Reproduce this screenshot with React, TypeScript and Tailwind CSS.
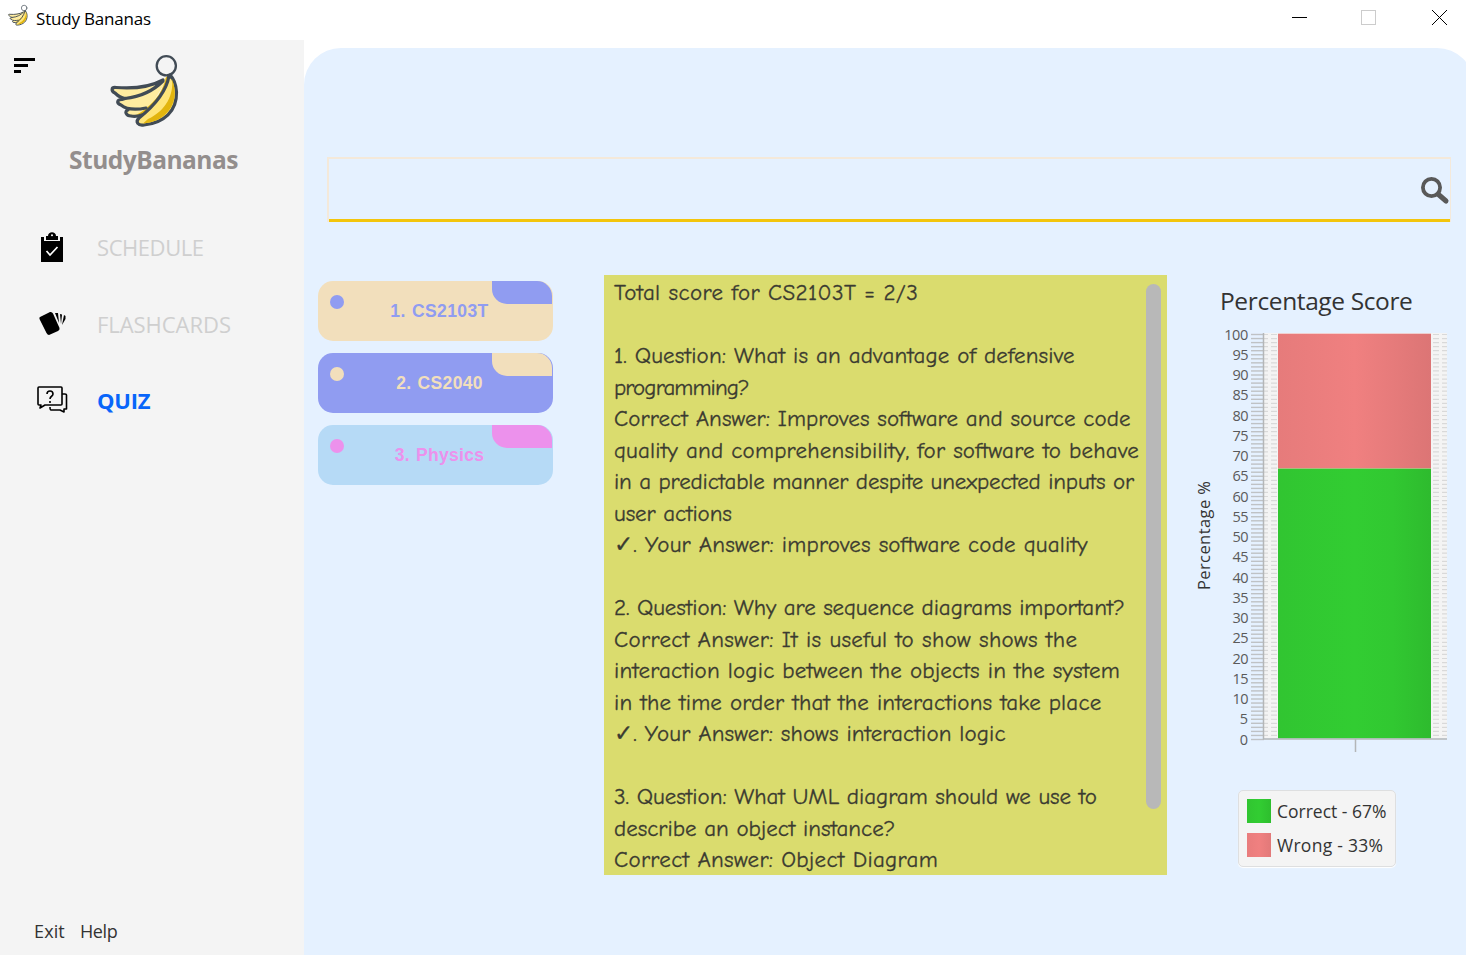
import React, { useLayoutEffect, useRef, useState } from "react";

// Text whose tracking is adjusted so that it spans the given width.
function Fit({ w, children, className = "" }: { w: number; children: string; className?: string }) {
  const ref = useRef<HTMLSpanElement>(null);
  const [spacing, setSpacing] = useState(0);
  useLayoutEffect(() => {
    if (ref.current) setSpacing((w - ref.current.offsetWidth) / children.length);
  }, [w, children]);
  return (
    <span ref={ref} className={"inline-block whitespace-pre " + className} style={{ letterSpacing: spacing }}>
      {children}
    </span>
  );
}

function Bananas({ className }: { className: string }) {
  return (
    <svg viewBox="0 0 90 90" className={className} fill="none" stroke="#414b55" strokeWidth="3.2" strokeLinejoin="round" strokeLinecap="round">
      <path stroke="none" fill="#ffeca0" d="M63 34C50 41 34 43.500 16 42C11 41.500 11 46 15 48C18 51 21 53 25 53L22 54C17 54 16 58 21 60L28 65C24 66 26 71 31 71C35 72 41 71 46 69L69 31Z" />
      <path stroke="none" fill="#e2b50e" d="M66 32C64 44 55 57 45 64C42 67 39 68 36 70C48 71 62 55 69 31Z" />
      <path d="M63 35C50 42 34 44 16 42.500C11 42 11 46 15 48C18 51 21 53 25 53.500C43 51.500 54 45 63 36" />
      <path d="M25 53.500L22 54.500C17 54.500 16 58 21 60C27 65 36 65 46 63" />
      <path d="M28 65C24 66 26 71 31 71C35 72 39 71 42 70" />
      <path fill="#ffe67a" d="M69 31C66 48 54 61 39 73C35 77 38 81 44 80C64 78 77 66 76.500 47C76 40 74 34 70 30Z" />
      <path stroke="none" fill="#e2b50e" d="M72 34C74 49 66 66 48 74L43 78.400C62 77.500 75 64 74.800 47C74.500 41 73 37 72 34Z" />
      <circle cx="66.300" cy="20.800" r="9.600" strokeWidth="2.300" />
      <path strokeWidth="3.500" d="M69 31L71 32" />
    </svg>
  );
}

const ui = "font-['Open_Sans','Noto_Sans',sans-serif]";

function TitleBar() {
  return (
    <header className="flex h-10 shrink-0 items-start justify-between bg-white">
      <div className="flex items-start pl-[5px]">
        <Bananas className="mt-0.5 h-[26px] w-[26px]" />
        <Fit w={114.5} className="ml-[5px] mt-[5px] text-[17px] leading-[27px] text-black">Study Bananas</Fit>
      </div>
      <svg className="h-9 w-[186px]" viewBox="0 0 186 36" fill="none" shapeRendering="crispEdges">
        <path d="M12 17.500H27" stroke="#000" />
        <rect x="81.500" y="10.500" width="14" height="14" stroke="#ccc" />
        <path d="M152 10L167 25M167 10L152 25" stroke="#000" shapeRendering="auto" />
      </svg>
    </header>
  );
}

function Sidebar() {
  return (
    <aside className="flex w-[304px] shrink-0 flex-col bg-[#f4f4f4]">
      <div className="flex h-[100px] items-start">
        <svg className="ml-3.5 mt-[18px] h-4 w-[22px]" viewBox="0 0 22 16" shapeRendering="crispEdges">
          <path d="M0 0H21V3H0ZM0 6H14V9H0ZM0 12H7V15H0Z" />
        </svg>
        <Bananas className="ml-16 mt-[5px] h-[90px] w-[90px]" />
      </div>
      <Fit w={169} className="ml-[69px] self-start text-[24.500px] leading-10 font-bold text-[#938e8d]">StudyBananas</Fit>
      <nav className="mt-[30px] flex flex-col">
        <div className="flex h-[76px] items-center pl-9">
          <svg className="mb-1 h-8 w-8" viewBox="0 0 32 32">
            <path d="M5 7H8V11H24V7H27V32H5ZM10 6H12C12 1 20 1 20 6H22V10H10Z" />
            <circle cx="16" cy="5.200" r="1" fill="#fff" />
            <path d="M10.500 21L14 25L21.500 17" fill="none" stroke="#fff" strokeWidth="1.700" />
          </svg>
          <Fit w={106.5} className="mb-0.5 ml-[29px] text-[22px] text-[#cfcfcf]">SCHEDULE</Fit>
        </div>
        <div className="flex h-[78px] items-center pl-9">
          <svg className="mb-0.5 h-8 w-8" viewBox="0 0 32 32">
            <path d="M4 9L14 4Q16 3.500 17 5.500L23.500 20Q24 22 22 23L13 27Q11.500 27 10.500 25L3.500 11Q3 9.500 4 9ZM19 5H22L23 15ZM24 6L26 6.500L25 16ZM28 7L29.500 8V11L26 17Z" />
          </svg>
          <Fit w={133.5} className="mb-0.5 ml-[29px] text-[22px] text-[#cfcfcf]">FLASHCARDS</Fit>
        </div>
        <div className="flex h-[74px] items-center pl-9">
          <svg className="mb-0.5 h-8 w-8" viewBox="0 0 32 32" fill="none" stroke="#000" strokeWidth="1.600" strokeLinejoin="round">
            <path d="M3 3H25Q26 3 26 4V20Q26 21 25 21H9L4 24L5 21H3Q2 21 2 20V4Q2 3 3 3ZM26 10H29Q30.500 10 30.500 11V25H28V28L24 26H15Q14 26 14 23" />
            <path d="M11 10C11 6 17 6 17 10C17 12.500 14 12 14 15M14 17V19" />
          </svg>
          <Fit w={53} className="mb-0.5 ml-[29px] text-[22px] font-bold text-[#0865fa]">QUIZ</Fit>
        </div>
      </nav>
      <div className="mt-auto flex h-12 items-center pl-[34px] text-[18px] text-[#333]">
        <Fit w={30.5}>Exit</Fit>
        <Fit w={37.5} className="ml-[15px]">Help</Fit>
      </div>
    </aside>
  );
}

type Quiz = { name: string; w: number; card: string; dot: string; text: string };
const quizzes: Quiz[] = [
  { name: "1. CS2103T", w: 98, card: "bg-[#f2dfbc]", dot: "bg-[#909cf1]", text: "text-[#909cf1]" },
  { name: "2. CS2040", w: 87, card: "bg-[#909cf1]", dot: "bg-[#f2dfbc]", text: "text-[#f2dfbc]" },
  { name: "3. Physics", w: 90, card: "bg-[#b6daf6]", dot: "bg-[#ec91ec]", text: "text-[#ec91ec]" },
];

function QuizCard({ q }: { q: Quiz }) {
  return (
    <div className={"flex h-[60px] items-start rounded-[15px] " + q.card}>
      <div className={"ml-3 mt-3.5 h-3.5 w-3.5 rounded-full " + q.dot} />
      <div className={"ml-[18px] mt-[18px] w-[155px] text-center font-['Liberation_Sans',sans-serif] text-[17.500px] leading-6 font-bold [word-spacing:1px] " + q.text}>
        <Fit w={q.w}>{q.name}</Fit>
      </div>
      <div className={"-ml-[25px] h-[23px] w-[60px] rounded-tr-[15px] rounded-bl-[15px] " + q.dot} />
    </div>
  );
}

const lines: [string, number][] = [
  ["Total score for CS2103T = 2/3", 304],
  ["", 0],
  ["1. Question: What is an advantage of defensive", 461],
  ["programming?", 135],
  ["Correct Answer: Improves software and source code", 517],
  ["quality and comprehensibility, for software to behave", 525],
  ["in a predictable manner despite unexpected inputs or", 520],
  ["user actions", 118],
  ["✓. Your Answer: improves software code quality", 474],
  ["", 0],
  ["2. Question: Why are sequence diagrams important?", 511],
  ["Correct Answer: It is useful to show shows the", 463],
  ["interaction logic between the objects in the system", 506],
  ["in the time order that the interactions take place", 487],
  ["✓. Your Answer: shows interaction logic", 392],
  ["", 0],
  ["3. Question: What UML diagram should we use to", 483],
  ["describe an object instance?", 281],
  ["Correct Answer: Object Diagram", 324],
];

function Results() {
  return (
    <section className="ml-[51px] flex h-[600px] w-[563px] shrink-0 overflow-hidden bg-[#dadc6e] pl-[10px] pt-0.5">
      <div className="w-[532px] font-['Comic_Sans_MS','Comic_Neue',Lato,sans-serif] text-[23px] text-[#3b3b31] [-webkit-text-stroke:0.3px_#3b3b31]">
        {lines.map(([t, w], i) => (
          <div key={i} className="h-[31.5px] leading-[31.5px]">{t && <Fit w={w}>{t}</Fit>}</div>
        ))}
      </div>
      <div className="mt-[7px] h-[525px] w-[15px] rounded-full bg-[#b8b8b8]" />
    </section>
  );
}

function Chart() {
  const ticks = Array.from({ length: 101 }, (_, i) => i);
  const labels = Array.from({ length: 21 }, (_, i) => 100 - i * 5);
  return (
    <section className="ml-[27px] w-[256px] shrink-0 pt-2.5">
      <div className="h-8 pl-[26px] leading-8">
        <Fit w={192} className="text-[24.500px] text-[#333]">Percentage Score</Fit>
      </div>
      <div className="flex pt-[7px]">
        <div className="flex h-[422px] w-[21px] items-center justify-center">
          <div className="-rotate-90 whitespace-nowrap text-[16.500px] text-[#333]"><Fit w={109}>Percentage %</Fit></div>
        </div>
        <div className="ml-[3px] h-[426px] w-[30px] pt-[0.5px] text-right text-[14.500px] text-[#5a5a5a]">
          {labels.map((n) => (
            <div key={n} className="h-[20.25px] leading-[20.25px]"><Fit w={String(n).length * 8}>{String(n)}</Fit></div>
          ))}
        </div>
        <svg className="mt-[9px] h-[422px] w-[200px]" viewBox="0 0 200 422">
          <defs>
            <linearGradient id="red"><stop stopColor="#e67b7b" /><stop offset=".5" stopColor="#f08080" /><stop offset=".75" stopColor="#e67b7b" /><stop offset="1" stopColor="#dc7575" /></linearGradient>
            <linearGradient id="green"><stop stopColor="#31c531" /><stop offset=".5" stopColor="#32cd32" /><stop offset=".75" stopColor="#31c831" /><stop offset="1" stopColor="#2ebb2e" /></linearGradient>
          </defs>
          <rect x="16" width="183" height="405" fill="#f4f4f4" />
          {ticks.map((i) => (
            <g key={i}>
              <path d={`M3 ${1.5 + i * 4.05}H16`} stroke="#bfc2c5" strokeWidth="1.400" />
              {i < 100 && <path d={`M16 ${1.5 + i * 4.05}H20M23 ${1.5 + i * 4.05}H29M185 ${1.5 + i * 4.05}H191M194 ${1.5 + i * 4.05}H199`} stroke="#d9d9d9" strokeWidth="1.200" />}
            </g>
          ))}
          <rect x="30" y=".7" width="153" height="135" fill="url(#red)" />
          <rect x="30" y="135.500" width="153" height="270" fill="url(#green)" />
          <path d="M30 135.500H183" stroke="#a8bd7c" />
          <path d="M15.500 0V406H199M107.500 406V419" fill="none" stroke="#b4b6b8" strokeWidth="1.500" />
        </svg>
      </div>
      <div className="ml-11 mt-[35px] flex h-[77px] w-[158px] flex-col gap-2.5 rounded-[5px] border border-[#dedfe0] bg-[#f4f4f4] pl-2 pt-2 text-[17.500px] leading-6 text-[#333] shadow-[0_1px_1px_#fff]">
        <div className="flex h-6 gap-1.5"><div className="h-6 w-6 bg-linear-to-r from-[#31c531] via-[#32cd32] to-[#2ebe2e]" /><Fit w={110}>Correct - 67%</Fit></div>
        <div className="flex h-6 gap-1.5"><div className="h-6 w-6 bg-linear-to-r from-[#e97c7c] via-[#f08080] to-[#e27979]" /><Fit w={106}>Wrong - 33%</Fit></div>
      </div>
    </section>
  );
}

export default function App() {
  return (
    <div className={"flex h-[955px] w-[1466px] flex-col overflow-hidden bg-white " + ui}>
      <TitleBar />
      <div className="flex min-h-0 flex-1">
        <Sidebar />
        <main className="mt-2 flex w-[1170px] shrink-0 flex-col rounded-t-[37px] bg-[#e5f1ff] pt-[109px]">
          <div className="ml-[23px] flex h-[65px] w-[1124px] flex-col border-2 border-r border-b-0 border-[#f4e9da]">
            <div className="flex flex-1 items-center justify-end border-b-3 border-[#f3c50c] pt-0.5">
              <svg className="h-[30px] w-[30px]" viewBox="0 0 30 30" fill="none" stroke="#595959" strokeLinecap="round">
                <circle cx="11.500" cy="12.500" r="8.600" strokeWidth="3.800" />
                <path d="M18.500 19.500L26 26" strokeWidth="5" />
              </svg>
            </div>
          </div>
          <div className="mt-[53px] flex items-start pl-3.5">
            <div className="mt-1.5 flex w-[235px] flex-col gap-3">
              {quizzes.map((q) => <QuizCard key={q.name} q={q} />)}
            </div>
            <Results />
            <Chart />
          </div>
        </main>
      </div>
    </div>
  );
}
